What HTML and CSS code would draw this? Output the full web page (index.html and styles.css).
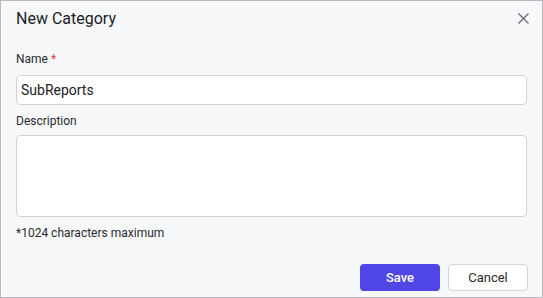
FILE: index.html
```html
<!DOCTYPE html>
<html lang="en">
<head>
    <meta charset="UTF-8">
    <title>New Category</title>
    <link rel="stylesheet" href="styles.css">
</head>
<body>
    <div class="dialog">
        <div class="dialog-header">
            <h1>New Category</h1>
            <button class="close-button" aria-label="Close">
                <svg width="11" height="11" viewBox="0 0 11 11">
                    <path d="M0.5 0.5 L10.5 10.5 M10.5 0.5 L0.5 10.5" stroke="#6e6e7a" stroke-width="1.4" fill="none"/>
                </svg>
            </button>
        </div>

        <div class="dialog-body">
            <label for="cat-name">Name <span class="required">*</span></label>
            <input type="text" id="cat-name" value="SubReports">

            <label for="cat-desc">Description</label>
            <textarea id="cat-desc"></textarea>

            <p class="hint">*1024 characters maximum</p>
        </div>

        <div class="dialog-footer">
            <button class="save-button">Save</button>
            <button class="cancel-button">Cancel</button>
        </div>
    </div>
</body>
</html>
```

FILE: styles.css
```css
body {
    margin: 0;
    font-family: Roboto, 'Liberation Sans', sans-serif;
    color: #222;
}

.dialog {
    width: 543px;
    height: 298px;
    box-sizing: border-box;
    border: 1px solid #b9b9be;
    background-color: #f7f8fa;
    display: flex;
    flex-direction: column;
}

.dialog-header {
    display: flex;
    align-items: flex-start;
    justify-content: space-between;
    padding: 8px 13px 0 15px;
}

h1 {
    margin: 0;
    font-size: 16px;
    font-weight: 400;
    line-height: 20px;
    color: #1c1c1e;
}

.close-button {
    border: none;
    background: none;
    padding: 0;
    margin-top: 3px;
    width: 11px;
    height: 11px;
    cursor: pointer;
}

.dialog-body {
    padding: 22px 15px 0 15px;
}

label {
    display: block;
    font-size: 12px;
    line-height: 16px;
    color: #2a2a2e;
    margin-bottom: 8px;
}

.required {
    color: #e0443f;
}

input[type="text"], textarea {
    display: block;
    width: 100%;
    box-sizing: border-box;
    border: 1px solid #d3d3d9;
    border-radius: 4px;
    background-color: white;
    font-family: inherit;
    font-size: 14px;
    color: #222;
}

input[type="text"] {
    height: 30px;
    padding: 0 4px;
    margin-bottom: 8px;
}

textarea {
    height: 82px;
    resize: none;
    margin-top: -2px;
}

.hint {
    margin: 8px 0 0 0;
    font-size: 12px;
    line-height: 16px;
    color: #2a2a2e;
}

.dialog-footer {
    margin-top: auto;
    display: flex;
    justify-content: flex-end;
    gap: 8px;
    padding: 0 14px 6px 0;
}

.dialog-footer button {
    width: 80px;
    height: 27px;
    border-radius: 4px;
    font-family: inherit;
    font-size: 13px;
    cursor: pointer;
}

.save-button {
    border: none;
    background-color: #4f46e5;
    color: white;
    font-weight: 500;
}

.cancel-button {
    border: 1px solid #d3d3d9;
    background-color: white;
    color: #2a2a2e;
}
```
